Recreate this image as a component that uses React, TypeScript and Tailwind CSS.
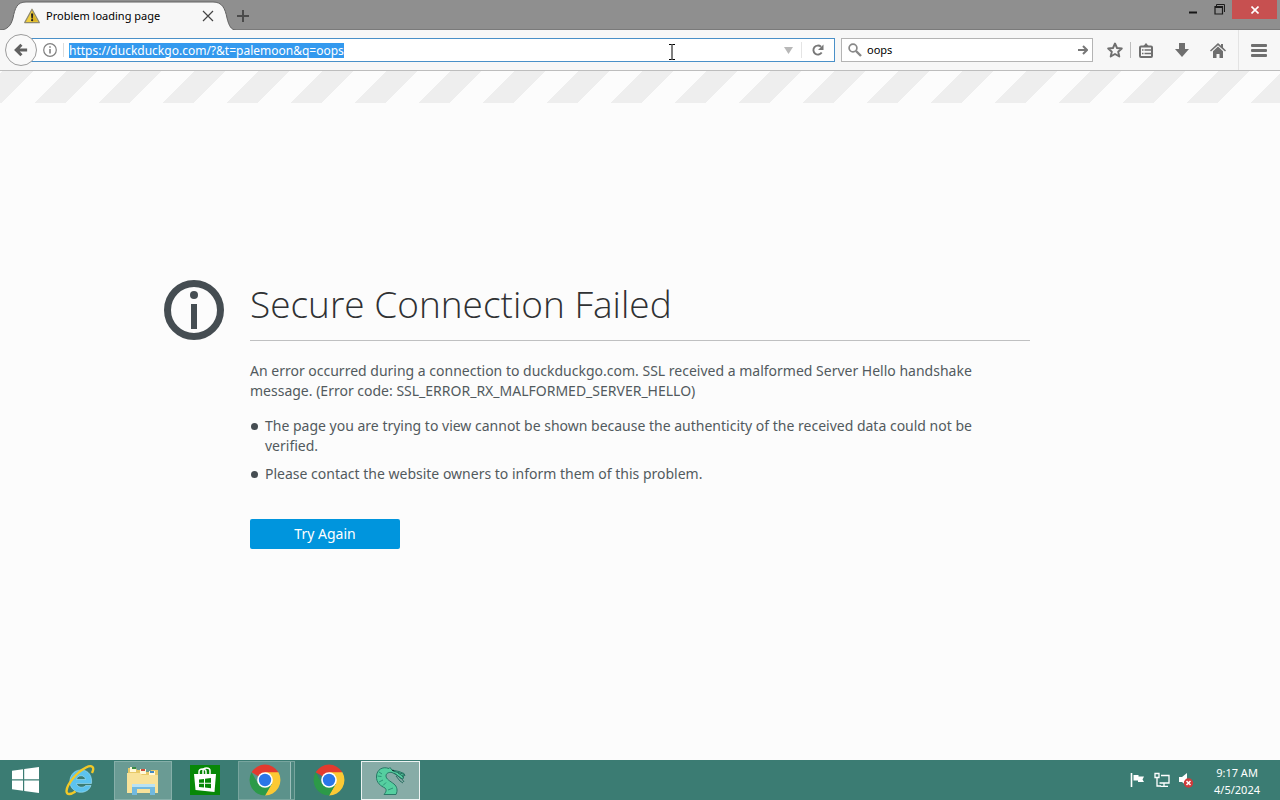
import { useEffect, useRef, useState, type ReactNode } from "react";

function WarningIcon() {
  return (
    <svg width="16" height="16" viewBox="0 0 16 16" aria-hidden="true">
      <path d="M8 1.2 15.3 14.6H.7Z" fill="#f0cf3f" stroke="#8f8a70" strokeWidth="1.2" strokeLinejoin="round" />
      <path d="M8 3.2 13.6 13.6H8Z" fill="#d9b224" />
      <path d="M7 5.4h2.2L8.8 10.4H7.4Z" fill="#222" />
      <circle cx="8.1" cy="12.2" r="1.1" fill="#222" />
    </svg>
  );
}

function TabStrip() {
  return (
    <header className="flex h-[30px] shrink-0 items-start justify-between border-b border-[#7a7a7a] bg-[#8f8f8f]">
      <div className="flex items-center">
        <div className="relative flex h-[30px] w-[236px] items-center pt-[2px] pr-[20px] pl-[24px]">
          <svg
            className="absolute inset-0 h-full w-full"
            viewBox="0 0 236 30"
            preserveAspectRatio="none"
            aria-hidden="true"
          >
            <path
              d="M0 30.5C7 29.500 11 26 13 18C15 8 17 2 26 2H213C222 2 225 8 227 18C229 26 231 29.500 236 30.500Z"
              fill="#f7f7f7"
              stroke="#626262"
              strokeWidth="1"
            />
          </svg>
          <span className="relative">
            <WarningIcon />
          </span>
          <span className="relative ml-[6px] flex-1 truncate text-[11px] leading-4 text-black">
            Problem loading page
          </span>
          <button type="button" aria-label="Close tab" className="relative flex w-4 justify-center">
            <svg width="12" height="12" viewBox="0 0 12 12" fill="none" stroke="#444" strokeWidth="1.2">
              <path d="M1 1l10 10M11 1L1 11" />
            </svg>
          </button>
        </div>
        <button type="button" aria-label="New tab" className="flex h-[30px] w-[14px] items-center justify-center pt-[2px]">
          <svg width="12" height="12" viewBox="0 0 12 12" stroke="#4b4b4b" strokeWidth="2">
            <path d="M6 0v12M0 6h12" />
          </svg>
        </button>
      </div>
      <div className="flex items-start">
        <button type="button" aria-label="Minimize" className="flex h-[19px] w-[26px] items-center justify-center">
          <svg width="10" height="10" viewBox="0 0 10 10">
            <path d="M1 6.500h8v2H1z" fill="#161616" />
          </svg>
        </button>
        <button type="button" aria-label="Restore" className="flex h-[19px] w-[26px] items-center justify-center">
          <svg width="11" height="11" viewBox="0 0 11 11" fill="none" stroke="#1c1c1c">
            <path d="M1 2.500h7.500v7.500H1zM1 3.500h7" strokeWidth="1.200" />
            <path d="M2.500 2V.5h8V8" />
          </svg>
        </button>
        <button
          type="button"
          aria-label="Close window"
          className="mr-[3px] flex h-[19px] w-[45px] items-center justify-center bg-[#c75050]"
        >
          <svg width="8" height="8" viewBox="0 0 8 8" stroke="#fff" strokeWidth="1.600">
            <path d="M.5.5l7 7M7.500.5l-7 7" />
          </svg>
        </button>
      </div>
    </header>
  );
}

function ToolButton({ label, children }: { label: string; children: ReactNode }) {
  return (
    <button type="button" aria-label={label} className="flex h-[26px] w-9 items-center justify-center text-[#6f6f6f]">
      {children}
    </button>
  );
}

function NavBar() {
  const [url, setUrl] = useState("https://duckduckgo.com/?&t=palemoon&q=oops");
  const [query, setQuery] = useState("oops");
  const urlRef = useRef<HTMLInputElement>(null);

  useEffect(() => {
    urlRef.current?.focus();
    urlRef.current?.select();
  }, []);

  return (
    <nav className="flex h-[41px] shrink-0 items-center border-b border-[#bdbdbd] bg-[#f7f7f7] pl-[5px]">
      <button
        type="button"
        aria-label="Back"
        className="relative z-10 flex size-8 shrink-0 items-center justify-center rounded-full border border-[#9c9c9c] bg-[#f9f9f9]"
      >
        <svg width="14" height="14" viewBox="0 0 16 14" fill="none" stroke="#606060" strokeWidth="3.400">
          <path d="M8.500 1L2.500 7l6 6M2.500 7H15" />
        </svg>
      </button>
      <div className="-ml-[6px] flex h-6 flex-1 items-center border border-[#4a90c8] bg-white pl-[11px]">
        <svg width="14" height="14" viewBox="0 0 14 14" fill="none" stroke="#808080" aria-hidden="true">
          <circle cx="7" cy="7" r="6.300" strokeWidth="1.200" />
          <path d="M7 6v4.500M7 3.300v1.500" strokeWidth="1.600" />
        </svg>
        <span className="ml-[6px] h-[14px] w-px bg-[#dcdcdc]" />
        <input
          ref={urlRef}
          aria-label="Address"
          value={url}
          onChange={(e) => setUrl(e.target.value)}
          className="ml-[5px] h-[15px] min-w-0 flex-1 bg-transparent text-[12px] leading-[15px] text-black outline-none selection:bg-[#3399ee] selection:text-white"
        />
        <button type="button" aria-label="Show history" className="flex w-[26px] justify-center">
          <svg width="9" height="7" viewBox="0 0 9 7">
            <path d="M0 0h9L4.500 7z" fill="#b8b8b8" />
          </svg>
        </button>
        <span className="h-4 w-px bg-[#e4e4e4]" />
        <button type="button" aria-label="Reload" className="flex w-8 justify-center">
          <svg width="12" height="12" viewBox="0 0 12 12" fill="none">
            <path d="M9.700 8.500A4.500 4.500 0 1 1 9 2.800" stroke="#777" strokeWidth="1.900" />
            <path d="M11.500.5V6H6z" fill="#777" />
          </svg>
        </button>
      </div>
      <div className="ml-[6px] flex h-6 w-[252px] items-center border border-[#b4b4b4] bg-white pr-1 pl-[6px]">
        <svg width="14" height="14" viewBox="0 0 14 14" fill="none" stroke="#888" aria-hidden="true">
          <circle cx="5" cy="5" r="3.900" strokeWidth="1.700" />
          <path d="M8 8l5 5" strokeWidth="2.400" />
        </svg>
        <input
          aria-label="Search"
          value={query}
          onChange={(e) => setQuery(e.target.value)}
          className="ml-[5px] min-w-0 flex-1 bg-transparent text-[11px] leading-4 text-black outline-none"
        />
        <button type="button" aria-label="Search">
          <svg width="10" height="10" viewBox="0 0 10 10" fill="none" stroke="#777" strokeWidth="2">
            <path d="M0 5h8.500M5 1l4 4-4 4" />
          </svg>
        </button>
      </div>
      <div className="ml-1 flex items-center">
        <ToolButton label="Bookmark this page">
          <svg width="16" height="16" viewBox="0 0 16 16" fill="none" stroke="currentColor" strokeWidth="1.900">
            <path d="M8 1.500l2 4.500 4.800.5-3.600 3.200 1.100 4.800L8 12l-4.300 2.500 1.100-4.800L1.200 6.500 6 6z" strokeLinejoin="round" />
          </svg>
        </ToolButton>
        <span className="-ml-[3px] h-4 w-px bg-[#bdbdbd]" />
        <span className="-ml-[3px] flex">
          <ToolButton label="Bookmarks">
            <svg width="14" height="15" viewBox="0 0 14 15" fill="none" stroke="currentColor">
              <rect x="1" y="3.500" width="12" height="10.500" rx="1" strokeWidth="2" />
              <path d="M4 3.500L7 0l3 3.500z" fill="currentColor" stroke="none" />
              <path d="M3 7h1.500M5.500 7H12M3 10.500h1.500M5.500 10.500H12" strokeWidth="1.500" />
            </svg>
          </ToolButton>
          <ToolButton label="Downloads">
            <svg width="14" height="14" viewBox="0 0 14 14" fill="currentColor">
              <path d="M4 0h6v6h4l-7 8-7-8h4z" />
            </svg>
          </ToolButton>
          <ToolButton label="Home">
            <svg width="16" height="15" viewBox="0 0 16 15" fill="currentColor">
              <path d="M8 0l3 2.700V1h2v3.500L16 7.500l-1 1L8 2.200 1 8.500l-1-1z" />
              <path d="M3 8.200l5-4.600 5 4.600V15H9.500v-4h-3v4H3z" />
            </svg>
          </ToolButton>
        </span>
      </div>
      <div className="ml-[2px] flex h-full items-center border-l border-[#e3e3e3] pr-[3px] pl-[2px]">
        <ToolButton label="Open menu">
          <svg width="16" height="13" viewBox="0 0 16 13" fill="currentColor">
            <rect width="16" height="3" rx="1" />
            <rect y="5" width="16" height="3" rx="1" />
            <rect y="10" width="16" height="3" rx="1" />
          </svg>
        </ToolButton>
      </div>
    </nav>
  );
}

function ErrorPage() {
  return (
    <main className="flex min-h-0 flex-1 flex-col bg-[#fcfcfc]">
      <div className="h-8 shrink-0 bg-[linear-gradient(-45deg,#eeeeee_33%,#fcfcfc_33%,#fcfcfc_67%,#eeeeee_67%)] bg-[length:64px_32px] bg-[position:2px_0px] bg-repeat-x" />
      <div className="flex flex-1 items-center justify-center pb-[34px]">
        <div className="flex w-full max-w-[952px] items-start gap-[26px] pr-[86px]">
          <svg width="60" height="60" viewBox="0 0 60 60" className="shrink-0" aria-hidden="true">
            <circle cx="30" cy="30" r="26.500" fill="none" stroke="#454d52" strokeWidth="7" />
            <circle cx="30" cy="15" r="4" fill="#454d52" />
            <path d="M27 24h6v25h-6z" fill="#454d52" />
          </svg>
          <div className="min-w-0 flex-1 text-[14px] leading-5 text-[#525a5e]">
            <h1 className="border-b border-[#bfc0c1] pb-[12px] font-['Open_Sans','Noto_Sans',sans-serif] text-[37px] leading-[48px] font-[350] text-[#2f3133]">
              Secure Connection Failed
            </h1>
            <p className="mt-5 max-w-[740px]">
              An error occurred during a connection to duckduckgo.com. SSL received a malformed Server Hello handshake
              message. (Error code: SSL_ERROR_RX_MALFORMED_SERVER_HELLO)
            </p>
            <ul className="mt-[15px] flex max-w-[740px] flex-col gap-2">
              <li className="flex gap-[7px]">
                <span className="mt-[7px] ml-px size-[7px] shrink-0 rounded-full bg-[#454d52]" />
                <span>
                  The page you are trying to view cannot be shown because the authenticity of the received data could not
                  be verified.
                </span>
              </li>
              <li className="flex gap-[7px]">
                <span className="mt-[7px] ml-px size-[7px] shrink-0 rounded-full bg-[#454d52]" />
                <span>Please contact the website owners to inform them of this problem.</span>
              </li>
            </ul>
            <button type="button" className="mt-[35px] h-[30px] w-[150px] rounded-[2px] bg-[#0095dd] text-white">
              Try Again
            </button>
          </div>
        </div>
      </div>
    </main>
  );
}

function ChromeIcon() {
  return (
    <svg width="32" height="32" viewBox="0 0 32 32" aria-hidden="true">
      <path d="M16 16L2.600 8.300A15.500 15.500 0 0 1 29.400 8.300z" fill="#e33b2e" />
      <path d="M16 8.300h13.400A15.500 15.500 0 0 1 16 31.500l6.700-11.600z" fill="#fcc934" />
      <path d="M9.300 19.900L2.600 8.300A15.500 15.500 0 0 0 16 31.500l6.700-11.600z" fill="#2c9a48" />
      <circle cx="16" cy="16" r="7.800" fill="#fff" />
      <circle cx="16" cy="16" r="6.200" fill="#2a76e8" />
    </svg>
  );
}

function Taskbar() {
  return (
    <footer className="flex h-10 shrink-0 items-center bg-[#3b7c73] text-white">
      <button type="button" aria-label="Start" className="flex h-10 w-[50px] items-center justify-center">
        <svg width="27" height="26" viewBox="0 0 27 26" fill="#fff">
          <path d="M0 3.800L11 2.200V12.300H0zM12.200 2L27 0v12.300H12.200zM0 13.500h11v10.200L0 22.200zM12.200 13.500H27V26l-14.800-2.100z" />
        </svg>
      </button>
      <button type="button" aria-label="Internet Explorer" className="ml-[1px] flex h-10 w-[58px] items-center justify-center">
        <svg width="32" height="32" viewBox="0 0 32 32" fill="none">
          <path
            d="M27.500 19.500H12.500C13 23.500 19.500 24.500 21.500 21.500H27C24.500 28.500 16 30 10.500 26.500C4.500 22.500 4.500 13.500 9.500 8.800C14 4.600 22 5 25.500 10C27.500 13 27.800 16 27.500 19.500zM12.500 15.500H21.500C21 10.500 13.200 10.500 12.500 15.500z"
            fill="#5cc3ee"
            fillRule="evenodd"
            stroke="#a5e2f8"
            strokeWidth=".6"
          />
          <path d="M28 9C31 3 28 .5 22 3.500C13 8 3 20 2.500 27c0 4.500 4.500 3.500 9 .5" stroke="#f1c928" strokeWidth="2.400" />
        </svg>
      </button>
      <button
        type="button"
        aria-label="File Explorer"
        className="ml-[5px] flex h-[39px] w-[58px] items-center justify-center border border-[#86afa9] bg-[#6a9b94]"
      >
        <svg width="34" height="30" viewBox="0 0 34 30">
          <path d="M2 3h8l1 2h6l1 2h6l1-2h7v23H2z" fill="#e8c968" />
          <path d="M4 2h6v5H4zM14 4h6v5h-6zM23 6h6v4h-6z" fill="#fff8d9" />
          <path d="M6 2h4v2H6z" fill="#388a42" />
          <path d="M15 4h4v2h-4z" fill="#cf4d3a" />
          <path d="M24 6h4v2h-4z" fill="#438ac3" />
          <path d="M1 8h13l2 2h16v18H1z" fill="#f8e29a" />
          <path d="M6 30V19h23v11h-5v-6H11v6z" fill="#71b9df" />
          <path d="M6 19h23v3H6z" fill="#b8e2f4" />
        </svg>
      </button>
      <button type="button" aria-label="Store" className="ml-[4px] flex h-10 w-[58px] items-center justify-center">
        <svg width="30" height="30" viewBox="0 0 30 30">
          <path d="M0 0h30v30H0z" fill="#078807" />
          <path d="M9 9V7c0-4 7-4 7 0v2M13 9V6c0-4 7-4 7 0v3" fill="none" stroke="#fff" strokeWidth="1.500" />
          <path d="M4 9h22l-1.500 18-19-2z" fill="#fff" />
          <path d="M9 14.500l5-.6v3.800H9zM15 13.800l6-.7v4.600h-6zM9 18.700h5v3.800l-5-.6zM15 18.700h6v4.600l-6-.7z" fill="#078807" />
        </svg>
      </button>
      <div className="ml-[4px] flex h-[39px] border border-[#78a59e]">
        <button type="button" aria-label="Google Chrome windows" className="flex w-[52px] items-center justify-center border-r border-[#9cbfba] bg-[#5c928b]">
          <ChromeIcon />
        </button>
        <span className="w-[3px] bg-[#4b867e]" />
      </div>
      <button type="button" aria-label="Google Chrome" className="ml-[4px] flex h-10 w-[60px] items-center justify-center">
        <ChromeIcon />
      </button>
      <button
        type="button"
        aria-label="Browser"
        className="ml-[2px] flex h-[39px] w-[59px] items-center justify-center border border-[#edf3f2] bg-[#87aca7]"
      >
        <svg width="32" height="32" viewBox="0 0 32 32" strokeLinejoin="round">
          <path
            d="M9 30.500h12c2-4 1-8-2-10.500c-4-3-8-5-8-8c0-3 3-4 6-3.500l4 2 5 4 3-.5-2-2 3-.5-1-2-5-2-7-1.500-2-2.500-1 1C7 2 2 6 1.500 12C1 19 6 22 10 24c2 2 1 4-1 6.500z"
            fill="#55cfa0"
            stroke="#287866"
            strokeWidth="1"
          />
          <path d="M18 7l10 3 2 1M19 9l8 6 2 3M21 12l4 5 3 2M23 9l6 4" fill="none" stroke="#276e60" />
          <path d="M17 6.500h2" stroke="#163f38" />
          <path d="M4 8l3 2M2.500 12l4 .5M4 18l4-2M8 21.500l3-3M13 26l5-2" fill="none" stroke="#2d9377" />
        </svg>
      </button>
      <div className="ml-auto flex items-center gap-2 pr-5">
        <svg width="16" height="16" viewBox="0 0 16 16" aria-hidden="true">
          <path d="M1.500 1v14" stroke="#fff" strokeWidth="1.600" />
          <path d="M3.500 3h5v1.500H14l-1.500 3L14 10H8V8.500H3.500z" fill="#fff" />
        </svg>
        <svg width="16" height="16" viewBox="0 0 16 16" fill="none" stroke="#fff" strokeWidth="1.300" aria-hidden="true">
          <path d="M7 3.500H15v7.500H5.500M10 11v3M6.500 14.300H14" />
          <path d="M1 1.500h4v4H1zM3 5.500V14h4" />
        </svg>
        <svg width="16" height="16" viewBox="0 0 16 16" aria-hidden="true">
          <path d="M1 5h3l5-4v13l-5-4H1z" fill="#fff" />
          <circle cx="10.500" cy="11" r="4.700" fill="#cf3b3b" />
          <path d="M8.500 9l4 4M12.500 9l-4 4" stroke="#fff" strokeWidth="1.500" />
        </svg>
        <time className="ml-3 pt-[2px] text-center text-[11px] leading-[17px]">
          9:17 AM
          <br />
          4/5/2024
        </time>
      </div>
    </footer>
  );
}

/* Text pointer resting over the address field. */
function TextPointer() {
  return (
    <svg className="pointer-events-none absolute top-[44px] left-[668px] z-20" width="8" height="16" viewBox="0 0 8 16" fill="none" stroke="#000" aria-hidden="true">
      <path d="M1 .5h2.500l.5.5.5-.5H7M4 1v14M1 15.500h2.500l.5-.5.5.5H7" />
    </svg>
  );
}

export default function App() {
  return (
    <div className="relative flex h-screen flex-col overflow-hidden font-['Noto_Sans','Open_Sans',sans-serif]">
      <TabStrip />
      <NavBar />
      <ErrorPage />
      <Taskbar />
      <TextPointer />
    </div>
  );
}
